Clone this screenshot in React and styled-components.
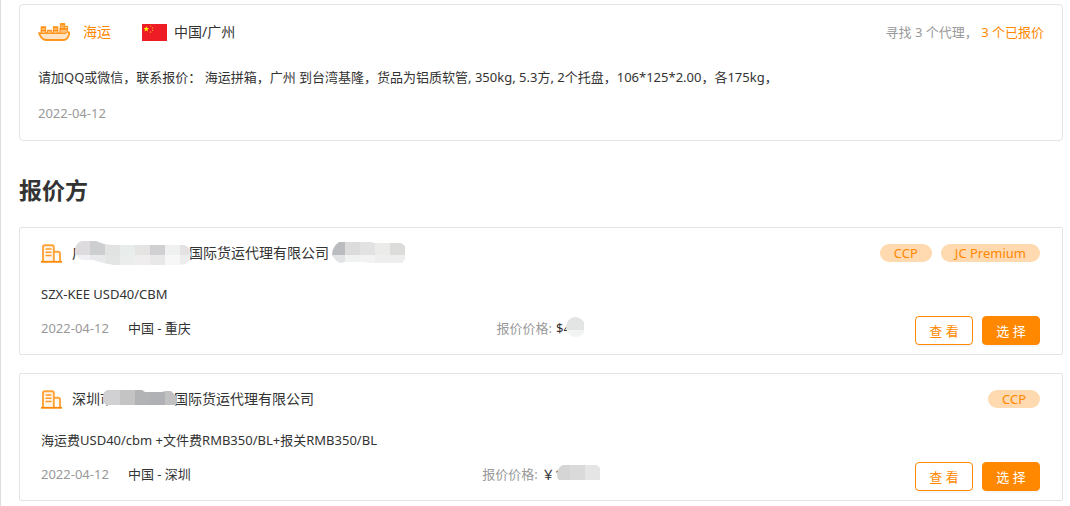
import React from "react";
import styled, { createGlobalStyle } from "styled-components";

const quotes = [
  {
    id: 1,
    company: [
      { text: "广", mask: "nameStart", width: 117 },
      { text: "国际货运代理有限公司" },
      { text: "", mask: "nameEnd", width: 74 },
    ],
    tags: ["CCP", "JC Premium"],
    detail: "SZX-KEE USD40/CBM",
    date: "2022-04-12",
    place: "中国 - 重庆",
    currency: "$",
    amount: { text: "4", mask: "dollar", width: 21 },
  },
  {
    id: 2,
    company: [
      { text: "深圳" },
      { text: "市", mask: "nameMiddle", width: 74 },
      { text: "国际货运代理有限公司" },
    ],
    tags: ["CCP"],
    detail: "海运费USD40/cbm +文件费RMB350/BL+报关RMB350/BL",
    date: "2022-04-12",
    place: "中国 - 深圳",
    currency: "￥",
    amount: { text: "1", mask: "yuan", width: 44 },
  },
];

// Each mask is an outline filled with blocks: [x, y, width, height, fill]
const masks = {
  nameStart: {
    width: 119,
    outline:
      "M10 0H24L32 3L41 4H112Q118 5 119 13Q118 24 109 24H42L31 22L21 19H10Q5 17 3 12Q2 2 10 0Z",
    cells: [
      [0, 0, 18, 14, "#dddbdd"],
      [18, 0, 15, 14, "#cdced0"],
      [33, 0, 15, 14, "#e1e2e2"],
      [48, 0, 15, 14, "#e8eceb"],
      [63, 0, 15, 14, "#e5e4e3"],
      [78, 0, 15, 14, "#d0d0d2"],
      [93, 0, 15, 14, "#eff1f1"],
      [108, 0, 11, 14, "#e5e2e1"],
      [0, 14, 18, 10, "#f0eff3"],
      [18, 14, 15, 10, "#e8e9eb"],
      [33, 14, 15, 10, "#e3e5e5"],
      [48, 14, 15, 10, "#eaedec"],
      [63, 14, 15, 10, "#efeded"],
      [78, 14, 15, 10, "#e8e8e8"],
      [93, 14, 15, 10, "#f6f7f6"],
      [108, 14, 11, 10, "#ededed"],
    ],
  },
  nameEnd: {
    width: 76,
    outline:
      "M10 1H42L45 2H72L76 5V18L73 22H39L36 21H16L12 22Q7 21 3 14Q3 6 10 1Z",
    cells: [
      [0, 0, 16, 14, "#bbbcbf"],
      [16, 0, 15, 14, "#dcdcdd"],
      [31, 0, 15, 14, "#e2e2e2"],
      [46, 0, 15, 14, "#ebebea"],
      [61, 0, 15, 14, "#dcdcdb"],
      [0, 14, 16, 10, "#e2e3e5"],
      [16, 14, 15, 10, "#f0f1f1"],
      [31, 14, 15, 10, "#f2f2f2"],
      [46, 14, 30, 10, "#eeeeee"],
    ],
  },
  nameMiddle: {
    width: 77,
    outline: "M7 3H42L45 5H62L66 4H71L76 9L77 14L76 18H6Q3 15 3 10Q3 5 7 3Z",
    cells: [
      [0, 0, 20, 24, "#d1d0d3"],
      [20, 0, 15, 24, "#c4c4c4"],
      [35, 0, 15, 24, "#b2b3b5"],
      [50, 0, 15, 24, "#b0b1b5"],
      [65, 0, 12, 24, "#c1c1c2"],
    ],
  },
  dollar: {
    width: 21,
    outline: "M12 1Q17 1 21 6V17Q17 21 12 21Q4 20 3 11Q4 2 12 1Z",
    cells: [
      [0, 0, 21, 14, "#e2e5e4"],
      [0, 14, 21, 10, "#f2f3f3"],
    ],
  },
  yuan: {
    width: 45,
    outline: "M8 3H42L45 6V18H4Q2 16 2 12Q3 5 8 3Z",
    cells: [
      [0, 0, 15, 24, "#d5d5d6"],
      [15, 0, 15, 24, "#dadada"],
      [30, 0, 15, 24, "#e5e5e5"],
    ],
  },
};

const ShipIcon = () => (
  <svg width="32" height="18" viewBox="0 0 32 18" fill="none" aria-hidden="true">
    <path d="M2 10.5H30.5V12L27.5 16H7L3.5 14Z" fill="#ffe3c2" />
    <path
      d="M1 10.2H26.5L28 9.4H31.2V11C30.5 14 28.5 17 25.5 17H8C5 17 2.5 14 1 10.2Z"
      stroke="#ff9620"
      strokeWidth="1.8"
      strokeLinejoin="round"
    />
    <path
      d="M2.5 3.5H8V10H2.5ZM9.5 7H13.5V10H9.5ZM15 3.5H20.5V10H15ZM22 0.5H27V5H22ZM22 5H30V9.5H22Z"
      fill="#ffc27a"
    />
    <path
      d="M3.5 10V4.5H7.5V10M9.5 10V7.5H13.5V10M15.5 10V4.5H19.5V10M22 10V6H29.5V9M22.5 6V1H26.5V6M24.5 3.5H29.5V6"
      stroke="#ff9a2a"
      strokeWidth="1.3"
    />
    <path d="M3 4H8M15 4H20M22 1H27M3.5 7.5H7.5M15.5 7.5H19.5M22 6H29" stroke="#ff8800" />
  </svg>
);

const FlagIcon = () => (
  <svg width="25" height="17" viewBox="0 0 25 17" role="img" aria-label="中国">
    <rect width="25" height="17" fill="#ee1c25" />
    <path
      d="M4.3 2L5 4.1H7.1L5.4 5.4L6.1 7.5L4.3 6.2L2.5 7.5L3.2 5.4L1.5 4.1H3.6Z"
      fill="#ffff00"
    />
    <path
      d="M8 1.5H9.2V2.6H8ZM10 3.2H11.1V4.4H10ZM10 5.8H11.1V7H10ZM8 7.6H9.2V8.7H8Z"
      fill="#f9a51c"
    />
  </svg>
);

const CompanyIcon = () => (
  <svg width="21" height="19" viewBox="0 0 21 19" fill="none" aria-hidden="true">
    <path
      d="M2 17.5V3Q2 1.2 3.8 1.2H11Q12.8 1.2 12.8 3V17.5M13 7.8H17Q19 7.8 19 9.8V17.5"
      fill="#fff6eb"
      stroke="#ffa338"
      strokeWidth="1.9"
    />
    <path d="M0 17.8H21" stroke="#ff8800" strokeWidth="1.8" />
    <path d="M4.5 5H10.5M4.5 8.2H10.5M4.5 11.4H10.5" stroke="#ff9a26" strokeWidth="1.5" />
  </svg>
);

const Masked = ({ text, mask, width }) => {
  const { outline, cells, width: maskWidth } = masks[mask];

  return (
    <MaskedText $width={width}>
      {text}
      <MaskDrawing width={maskWidth} height="24" aria-hidden="true">
        <clipPath id={mask}>
          <path d={outline} />
        </clipPath>
        <g clipPath={`url(#${mask})`}>
          {cells.map(([x, y, w, h, fill]) => (
            <rect key={`${x}-${y}`} x={x} y={y} width={w} height={h} fill={fill} />
          ))}
        </g>
      </MaskDrawing>
    </MaskedText>
  );
};

const Quote = ({ quote }) => (
  <QuoteCard>
    <QuoteHeader>
      <CompanyIcon />
      <CompanyName>
        {quote.company.map((part, index) =>
          part.mask ? (
            <Masked key={index} {...part} />
          ) : (
            <span key={index}>{part.text}</span>
          )
        )}
      </CompanyName>
      <Tags>
        {quote.tags.map((tag) => (
          <Tag key={tag}>{tag}</Tag>
        ))}
      </Tags>
    </QuoteHeader>
    <Detail>{quote.detail}</Detail>
    <QuoteFooter>
      <Origin>
        <Muted>{quote.date}</Muted>
        <span>{quote.place}</span>
      </Origin>
      <Price>
        <Muted>报价价格:</Muted>
        <Amount>
          {quote.currency}
          <Masked {...quote.amount} />
        </Amount>
      </Price>
      <Actions>
        <Button type="button">查 看</Button>
        <Button type="button" $primary>
          选 择
        </Button>
      </Actions>
    </QuoteFooter>
  </QuoteCard>
);

const App = () => (
  <Page>
    <GlobalStyle />
    <RequestCard>
      <RequestHeader>
        <ShipIcon />
        <Mode>海运</Mode>
        <FlagIcon />
        <City>中国/广州</City>
        <Summary>
          寻找 3 个代理， <Highlight>3 个已报价</Highlight>
        </Summary>
      </RequestHeader>
      <RequestText>
        请加QQ或微信，联系报价： 海运拼箱，广州 到台湾基隆，货品为铝质软管, 350kg,
        5.3方, 2个托盘，106*125*2.00，各175kg，
      </RequestText>
      <Muted>2022-04-12</Muted>
    </RequestCard>
    <Title>报价方</Title>
    <QuoteList>
      {quotes.map((quote) => (
        <Quote key={quote.id} quote={quote} />
      ))}
    </QuoteList>
  </Page>
);

export default App;

const GlobalStyle = createGlobalStyle`
  * {
    box-sizing: border-box;
  }

  body {
    margin: 0;
    background: #fff;
    color: #333;
    font-family: "Noto Sans", "Noto Sans CJK SC", sans-serif;
    font-size: 13px;
    line-height: 22px;
  }

  svg {
    flex-shrink: 0;
  }
`;

const Page = styled.main`
  min-height: 100vh;
  padding: 4px 7px 4px 18px;
  border-left: 1px solid #ddd;
`;

const RequestCard = styled.section`
  padding: 16px 18px;
  border: 1px solid #e4e4e4;
  border-radius: 4px;
`;

const RequestHeader = styled.div`
  display: flex;
  align-items: center;
`;

const Mode = styled.span`
  margin: 0 31px 0 13px;
  color: #ff8800;
  font-size: 14px;
`;

const City = styled.span`
  margin-left: 7px;
  font-size: 14px;
`;

const Summary = styled.span`
  margin-left: auto;
  color: #999;
`;

const Highlight = styled.span`
  color: #ff8800;
`;

const RequestText = styled.p`
  margin: 23px 0 14px;
`;

const Muted = styled.span`
  color: #999;
`;

const Title = styled.h2`
  margin: 33px 0 21px;
  font-size: 23px;
  font-weight: 700;
  line-height: 32px;
`;

const QuoteList = styled.div`
  display: flex;
  flex-direction: column;
  gap: 18px;
`;

const QuoteCard = styled.article`
  padding: 13px 22px 9px 21px;
  border: 1px solid #e4e4e4;
  border-radius: 2px;
`;

const QuoteHeader = styled.div`
  display: flex;
  align-items: center;
  height: 24px;
`;

const CompanyName = styled.h3`
  display: flex;
  margin: 0 0 0 10px;
  font-size: 14px;
  font-weight: 400;
  line-height: 24px;
`;

const MaskedText = styled.span`
  position: relative;
  display: inline-block;
  width: ${(props) => props.$width}px;
  height: 24px;
  line-height: 24px;
  vertical-align: top;
`;

const MaskDrawing = styled.svg`
  position: absolute;
  top: 0;
  left: 0;
`;

const Tags = styled.div`
  display: flex;
  gap: 9px;
  margin-left: auto;
`;

const Tag = styled.span`
  padding: 0 14px;
  border-radius: 9px;
  background: #ffd9b0;
  color: #ff8800;
  line-height: 18px;
`;

const Detail = styled.p`
  margin: 18px 0 11px;
`;

const QuoteFooter = styled.div`
  display: grid;
  grid-template-columns: 1fr auto 1fr;
  align-items: start;
  line-height: 24px;
`;

const Origin = styled.div`
  display: flex;
  gap: 19px;
`;

const Price = styled.div`
  display: flex;
  gap: 4px;
`;

const Amount = styled.span`
  display: flex;
`;

const Actions = styled.div`
  display: flex;
  justify-content: flex-end;
  gap: 9px;
`;

const Button = styled.button`
  width: 58px;
  height: 29px;
  padding: 0;
  border: 1px solid #ff8800;
  border-radius: 4px;
  background: ${(props) => (props.$primary ? "#ff8800" : "#fff")};
  box-shadow: 0 2px 0 rgba(0, 0, 0, 0.03);
  color: ${(props) => (props.$primary ? "#fff" : "#ff8800")};
  font: inherit;
  cursor: pointer;
`;
